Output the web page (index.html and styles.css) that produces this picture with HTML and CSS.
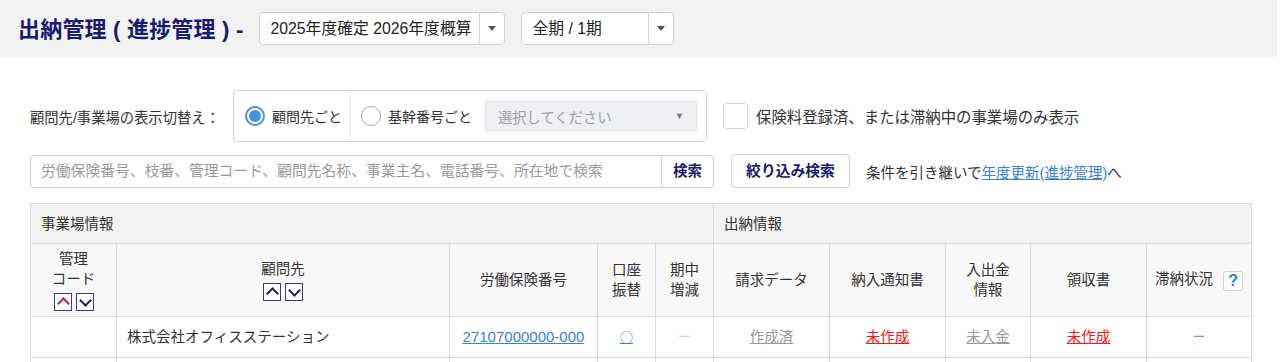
FILE: index.html
```html
<!DOCTYPE html>
<html lang="ja">
<head>
    <meta charset="UTF-8">
    <meta name="viewport" content="width=device-width, initial-scale=1.0">
    <title>出納管理 (進捗管理)</title>
    <link rel="stylesheet" href="styles.css">
</head>
<body>
    <!-- Page Header -->
    <div class="page-head">
        <h1 class="page-title">出納管理 ( 進捗管理 ) -</h1>
        <div class="select select-year">
            <span class="select-text">2025年度確定 2026年度概算</span>
            <span class="select-arrow"></span>
        </div>
        <div class="select select-term">
            <span class="select-text">全期 / 1期</span>
            <span class="select-arrow"></span>
        </div>
    </div>

    <!-- Filters -->
    <div class="filters">
        <div class="filter-row">
            <span class="filter-label">顧問先/事業場の表示切替え：</span>
            <div class="radio-group">
                <label class="radio radio-on"><span class="radio-mark"></span>顧問先ごと</label>
                <label class="radio radio-split"><span class="radio-mark"></span>基幹番号ごと</label>
                <div class="select-disabled">
                    <span>選択してください</span>
                    <span class="caret">▼</span>
                </div>
            </div>
            <label class="check"><span class="check-box"></span>保険料登録済、または滞納中の事業場のみ表示</label>
        </div>

        <div class="filter-row">
            <div class="search">
                <span class="search-input">労働保険番号、枝番、管理コード、顧問先名称、事業主名、電話番号、所在地で検索</span>
                <span class="search-btn">検索</span>
            </div>
            <span class="btn">絞り込み検索</span>
            <span class="note">条件を引き継いで<a href="#">年度更新(進捗管理)</a>へ</span>
        </div>
    </div>

    <!-- Table -->
    <table class="progress">
        <colgroup>
            <col style="width: 86px">
            <col style="width: 333px">
            <col style="width: 148px">
            <col style="width: 58px">
            <col style="width: 58px">
            <col style="width: 116px">
            <col style="width: 116px">
            <col style="width: 85px">
            <col style="width: 116px">
            <col style="width: 105px">
        </colgroup>
        <tr class="group-row">
            <th colspan="5">事業場情報</th>
            <th colspan="5">出納情報</th>
        </tr>
        <tr class="head-row">
            <th>
                <div>管理<br>コード</div>
                <div class="sort">
                    <span class="sort-btn sort-up active"></span><span class="sort-btn sort-down"></span>
                </div>
            </th>
            <th>
                <div>顧問先</div>
                <div class="sort">
                    <span class="sort-btn sort-up"></span><span class="sort-btn sort-down"></span>
                </div>
            </th>
            <th>労働保険番号</th>
            <th>口座<br>振替</th>
            <th>期中<br>増減</th>
            <th>請求データ</th>
            <th>納入通知書</th>
            <th>入出金<br>情報</th>
            <th>領収書</th>
            <th>滞納状況<span class="help">?</span></th>
        </tr>
        <tr class="data-row">
            <td></td>
            <td class="name">株式会社オフィスステーション</td>
            <td><a href="#" class="link">27107000000-000</a></td>
            <td><a href="#" class="circle">○</a></td>
            <td class="muted">ー</td>
            <td><a href="#" class="done">作成済</a></td>
            <td><a href="#" class="todo">未作成</a></td>
            <td><a href="#" class="done">未入金</a></td>
            <td><a href="#" class="todo">未作成</a></td>
            <td class="dash">ー</td>
        </tr>
        <tr class="data-row">
            <td></td><td></td><td></td><td></td><td></td>
            <td></td><td></td><td></td><td></td><td></td>
        </tr>
    </table>
</body>
</html>
```

FILE: styles.css
```css
/* General Reset */
* {
    margin: 0;
    padding: 0;
    box-sizing: border-box;
}

body {
    font-family: "Liberation Sans", "Noto Sans CJK JP", sans-serif;
    font-size: 14.5px;
    color: #333;
    background: #fff;
}

a {
    color: #3d7fd6;
}

/* Page Header */
.page-head {
    display: flex;
    align-items: center;
    gap: 16px;
    height: 57px;
    margin-right: 3px;
    padding-left: 18px;
    background: #f2f2f2;
}

.page-title {
    font-size: 22px;
    font-weight: bold;
    color: #1a1a6e;
    line-height: 1;
    margin-top: 2px;
    letter-spacing: 0.2px;
}

.select {
    display: flex;
    height: 33px;
    background: #fff;
    border: 1px solid #d2d2d2;
    border-radius: 4px;
}

.select-year {
    width: 246px;
}

.select-term {
    width: 153px;
}

.select-text {
    flex: 1;
    padding-left: 10px;
    line-height: 31px;
    font-size: 15.8px;
    color: #222;
}

.select-arrow {
    position: relative;
    width: 25px;
    border-left: 1px solid #d2d2d2;
}

.select-arrow::after {
    content: "";
    position: absolute;
    top: 13px;
    left: 8px;
    border-left: 4.5px solid transparent;
    border-right: 4.5px solid transparent;
    border-top: 5px solid #555;
}

/* Filters */
.filters {
    padding: 33px 0 0 30px;
}

.filter-row {
    display: flex;
    align-items: center;
}

.filter-row + .filter-row {
    margin-top: 12px;
}

.filter-label {
    width: 203px;
    font-size: 14.3px;
}

.radio-group {
    display: flex;
    align-items: center;
    width: 474px;
    height: 52px;
    border: 1px solid #d2d2d2;
    border-radius: 4px;
}

.radio {
    display: flex;
    align-items: center;
    height: 100%;
    padding-left: 11px;
    font-size: 14px;
}

.radio-on {
    width: 116px;
}

.radio-split {
    width: 135px;
    border-left: 1px solid #e2e2e2;
    padding-left: 10px;
}

.radio-mark {
    display: inline-block;
    position: relative;
    width: 20px;
    height: 20px;
    margin-right: 7px;
    border: 1.5px solid #aaa;
    border-radius: 50%;
}

.radio-on .radio-mark {
    border: 2px solid #4a8fe7;
}

.radio-on .radio-mark::after {
    content: "";
    position: absolute;
    top: 2px;
    left: 2px;
    width: 12px;
    height: 12px;
    background: #4a8fe7;
    border-radius: 50%;
}

.select-disabled {
    display: flex;
    justify-content: space-between;
    align-items: center;
    width: 212px;
    height: 30px;
    padding: 0 12px 0 12px;
    background: #eef0f3;
    border: 1px solid #e0e2e6;
    color: #a0a0a0;
    font-size: 14.3px;
}

.caret {
    font-size: 9px;
    color: #777;
}

.check {
    display: flex;
    align-items: center;
    margin-left: 16px;
    font-size: 15.4px;
}

.check-box {
    width: 25px;
    height: 26px;
    margin-right: 8px;
    border: 1px solid #d2d2d2;
    border-radius: 4px;
    background: #fff;
}

.search {
    display: flex;
    width: 684px;
    height: 33px;
    border: 1px solid #d2d2d2;
    border-radius: 4px;
}

.search-input {
    flex: 1;
    padding-left: 10px;
    line-height: 31px;
    font-size: 14.8px;
    color: #9a9a9a;
}

.search-btn {
    width: 52px;
    border-left: 1px solid #d2d2d2;
    text-align: center;
    line-height: 31px;
    font-weight: bold;
    color: #1a1a6e;
}

.btn {
    margin-left: 17px;
    width: 119px;
    height: 34px;
    line-height: 32px;
    text-align: center;
    border: 1px solid #d2d2d2;
    border-radius: 4px;
    font-weight: bold;
    font-size: 14.8px;
    color: #1a1a6e;
}

.note {
    margin-left: 16px;
    font-size: 14.5px;
}

/* Table */
.progress {
    margin: 15px 0 0 30px;
    width: 1221px;
    table-layout: fixed;
    border-collapse: collapse;
}

.progress th,
.progress td {
    border: 1px solid #dcdcdc;
    font-weight: normal;
    text-align: center;
    vertical-align: middle;
    line-height: 20px;
}

.group-row th {
    height: 40px;
    padding-left: 10px;
    text-align: left;
    background: #f2f2f2;
}

.head-row th {
    height: 73px;
    background: #f8f8f8;
}

.sort {
    display: flex;
    justify-content: center;
    gap: 4px;
    margin-top: 4px;
}

.sort-btn {
    position: relative;
    width: 18px;
    height: 18px;
    background: #fff;
    border: 1px solid #3b3b8f;
}

.sort-btn::after {
    content: "";
    position: absolute;
    left: 4px;
    width: 7px;
    height: 7px;
    border-left: 2px solid #1a1a6e;
    border-top: 2px solid #1a1a6e;
}

.sort-up::after {
    top: 5px;
    transform: rotate(45deg);
}

.sort-down::after {
    top: 1.5px;
    transform: rotate(225deg);
}

.sort-up.active::after {
    border-color: #e0101a;
}

.help {
    display: inline-block;
    width: 20px;
    height: 20px;
    margin-left: 10px;
    line-height: 18px;
    border: 1px solid #d2d2d2;
    border-radius: 3px;
    background: #fff;
    color: #2f7fe0;
    font-size: 16px;
    font-weight: bold;
    vertical-align: middle;
}

.data-row td {
    height: 41px;
}

.data-row td.name {
    padding-left: 10px;
    text-align: left;
}

.link {
    font-size: 15px;
}

.circle {
    font-family: "Noto Sans CJK JP", sans-serif;
    font-size: 13px;
}

.muted {
    color: #d0d0d0;
    font-size: 13px;
}

.done {
    color: #999;
}

.todo {
    color: #f01818;
}

.dash {
    color: #6a9fd8;
    font-size: 13px;
}
```
